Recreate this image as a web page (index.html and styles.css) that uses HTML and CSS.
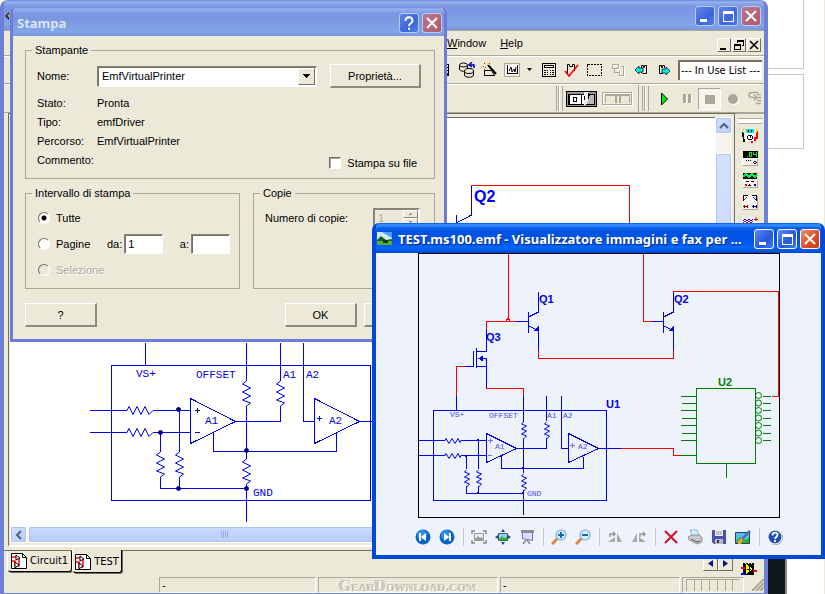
FILE: index.html
```html
<!DOCTYPE html>
<html lang="it">
<head>
<meta charset="utf-8">
<title>Stampa</title>
<link rel="stylesheet" href="styles.css">
</head>
<body>
<div class="desktop">
  <div class="page-box page-box-top"></div>
  <div class="page-box page-box-mid"></div>
  <div class="page-edge"></div>
  <div class="page-photo"></div>

  <section class="window editor" aria-label="Editor">
    <header class="titlebar muted">
      <svg class="app-mark" width="5" height="16" viewBox="0 0 5 16"><path d="M0 8l4-4v8z" fill="#222"/><path d="M2 8l2-2v3z" fill="#fa3"/></svg>
      <div class="controls">
        <button class="ctl" aria-label="Riduci"><svg width="18" height="18"><path d="M4 12h7v3H4z" fill="#fff"/></svg></button>
        <button class="ctl" aria-label="Ingrandisci"><svg width="18" height="18"><path d="M4 4h11v11H4zM5 7v7h9V7z" fill="#fff" fill-rule="evenodd"/></svg></button>
        <button class="ctl close" aria-label="Chiudi"><svg width="18" height="18"><path d="M4 4l10 10M14 4L4 14" stroke="#fff" stroke-width="2"/></svg></button>
      </div>
    </header>
    <nav class="menubar">
      <a href="#"><u>W</u>indow</a>
      <a href="#"><u>H</u>elp</a>
      <div class="mdi">
        <button aria-label="Riduci documento"><svg width="10" height="10" class="crisp"><path d="M1 8h6v2H1z"/></svg></button>
        <button aria-label="Ripristina documento"><svg width="10" height="10" class="crisp"><path d="M3 0h7v6H8V5h1V2H4v1H3zM0 4h7v6H0zM1 6v3h5V6z" fill-rule="evenodd"/></svg></button>
        <button aria-label="Chiudi documento"><svg width="10" height="10"><path d="M1 1l8 8M9 1L1 9" stroke="#000" stroke-width="1.6"/></svg></button>
      </div>
    </nav>
    <div class="toolbar">
      <button class="tool" aria-label="Griglia"><svg width="16" height="16" class="crisp"><path d="M4 2h9v12H4zM9 3v2h3V3zM9 6v2h3V6zM9 9v2h3V9z" fill-rule="evenodd"/></svg></button>
      <button class="tool" aria-label="Database"><svg width="16" height="16"><g fill="#ece9d8" stroke="#000"><path d="M.5 3v4c0 3 8 3 8 0V3"/><ellipse cx="4.500" cy="3" rx="4" ry="2"/><path d="M5.500 9v4c0 3 9 3 9 0V9"/><ellipse cx="10" cy="9" rx="4.500" ry="2.500"/></g><path d="M15 6V3h-4M13 0l-3 3 3 2" fill="none" stroke="#00a" stroke-width="1.500"/></svg></button>
      <button class="tool" aria-label="Procedura guidata"><svg width="16" height="16"><path d="M6 3l8 9" stroke="#000" stroke-width="2"/><path d="M2.500 8.500h7l3 5h-10z" fill="#ece9d8" stroke="#000"/><path d="M5 1h2v2H5z" fill="#ee0"/><path d="M2 1h1v1H2zM1 4h1v1H1zM3 5h1v1H3zM7 1h1v1H7zM2 7h1v1H2z" fill="#f00"/></svg></button>
      <button class="tool framed" aria-label="Grafico"><svg width="16" height="16" class="crisp"><path d="M.5 1.500h15v13H.5z" fill="#f4f2ea" stroke="#aca899"/><path d="M3 3h10v9H3z" fill="#fff"/><path d="M3.500 3v8.500H14M13.500 3v9" fill="none" stroke="#000"/><path d="M5 9l2-4 1 5 2-3 1 3 1-5" fill="none" stroke="#000" shape-rendering="auto"/></svg></button>
      <button class="tool drop" aria-label="Opzioni grafico"><svg width="6" height="4"><path d="M0 0h5L2.500 3z"/></svg></button>
      <button class="tool" aria-label="Calcolatrice"><svg width="16" height="16" class="crisp"><path d="M1.500 1.500h13v13h-13z" fill="#ece9d8" stroke="#000"/><path d="M3 3h10v3H3z"/><path d="M4 4h8v1H4z" fill="#fff"/><path d="M3 8h2v1H3zM6 8h1v1H6zM9 8h1v1H9zM11 8h2v1h-2zM3 10h2v1H3zM6 10h1v1H6zM9 10h1v1H9zM11 10h2v1h-2zM3 12h2v1H3zM6 12h1v1H6zM9 12h1v1H9zM11 12h2v1h-2z"/></svg></button>
      <button class="tool" aria-label="Verifica"><svg width="16" height="16"><path d="M3.500 12V2.500h2v2h3v-2h2V9" fill="none" stroke="#000"/><path d="M1 9l4 5L14 3" fill="none" stroke="#f00" stroke-width="1.700"/></svg></button>
      <button class="tool" aria-label="Selezione"><svg width="16" height="16" class="crisp"><path d="M.5 2.500h14v11H.5z" fill="none" stroke="#000" stroke-dasharray="2 1"/></svg></button>
      <button class="tool" aria-label="Sottocircuito"><svg width="16" height="16" class="crisp"><path d="M2.500 2.500h6v4h-6zM6.500 8.500h3M10.500 4.500h3v9h-4v-5" fill="none" stroke="#fff" transform="translate(1 1)"/><path d="M2.500 2.500h6v4h-6zM4.500 6v4h4M10.500 4.500h3v9h-4v-5" fill="none" stroke="#aca899"/></svg></button>
      <button class="tool" aria-label="Indietro"><svg width="16" height="16"><path d="M8.500 11V3.500h2v2h1v-2h2v8h-4" fill="#ece9d8" stroke="#000"/><path d="M2 8l4-4v2h4v4H6v2z" fill="#0ee" stroke="#000" stroke-width=".7"/></svg></button>
      <button class="tool" aria-label="Avanti"><svg width="16" height="16"><path d="M7 11.500H3.500v-8h2v2h1v-2h2V6" fill="#ece9d8" stroke="#000"/><path d="M14 9l-4-4v2H6v4h4v2z" fill="#0ee" stroke="#000" stroke-width=".7"/></svg></button>
      <select class="in-use" aria-label="In Use List"><option>--- In Use List ---</option></select>
    </div>
    <div class="toolbar sim">
      <span class="grip"></span>
      <button class="switch" aria-label="Interruttore"><svg width="31" height="16" class="crisp"><path d="M0 0h31v16H0z"/><path d="M1 1h29v14H1z" fill="#999"/><path d="M2 3h27v11H2z"/><path d="M4 4h11v9H4zM16 4h5v9h-5z" fill="#fff"/><path d="M18 1h5v9l-4 4h-1z" fill="#eee"/><path d="M22 2h1v8h-1zM18 5h1v4h-1z"/><path d="M24 4h4v9h-7z" fill="#bbb"/><path d="M7.500 6.500h3v4h-3z" fill="none" stroke="#000"/></svg></button>
      <button class="switch" aria-label="Pausa simulazione"><svg width="31" height="16" class="crisp"><path d="M1.500 2.500h29v12h-29z" fill="none" stroke="#fff"/><path d="M.5 1.500h29v12H.5z" fill="none" stroke="#aca899"/><path d="M3 3h25v2H3zM3 5h1v7H3zM27 5h1v7h-1zM13 5h2v7h-2zM17 5h2v7h-2z" fill="#aca899"/></svg></button>
      <span class="rule"></span>
      <span class="grip"></span>
      <button class="tool" aria-label="Avvia"><svg width="16" height="16"><path d="M5.500 2v12l6-6z" fill="#0e0" stroke="#000"/></svg></button>
      <button class="tool" aria-label="Pausa"><svg width="16" height="16" class="crisp"><path d="M5 4h3v9H5zM10 4h3v9h-3z" fill="#fff"/><path d="M4 3h3v9H4zM9 3h3v9H9z" fill="#aca899"/></svg></button>
      <button class="tool sunken" aria-label="Ferma"><svg width="16" height="16" class="crisp"><path d="M3 4h10v9H3z" fill="#aca899"/></svg></button>
      <button class="tool" aria-label="Registra"><svg width="16" height="16"><circle cx="9" cy="9" r="5" fill="#fff"/><circle cx="8" cy="8" r="5" fill="#aca899"/></svg></button>
      <button class="tool" aria-label="Passo"><svg width="16" height="16"><path d="M10 1.500H4c-4 0-4 5 0 5h4M6 3.500l3 3-3 3M9 3.500h4M10 6.500h3M9 9.500h4M8 12.500h5" fill="none" stroke="#aca899" stroke-width="1.500"/></svg></button>
    </div>

    <div class="workspace">
      <div class="document">
        <div class="sheet">
          <svg class="schematic" width="704" height="409" viewBox="10 118 704 409">
            <defs>
              <path id="zh" d="M0 0l2-4 4 8 4-8 4 8 4-8 4 8 4-4"/>
              <path id="zv" d="M0 0l-4 3 8 4-8 4 8 4-8 4 8 3-4 3"/>
            </defs>
            <g class="wire blue">
              <path d="M111.500 365.500h259v135h-259zM145.500 343v22M90 410.500h37M153 410.500h38M90 432.500h37M153 432.500h38M160.500 432v20M160.500 477v11h86M179.500 410v42M179.500 477v11M246.500 343v38M246.500 406v53M246.500 484v38M213.500 433v18h123v-19M236 421.500h44.500v-15.500M280.500 343v38M303.500 343v78.500h11M359 421.500h13M471.500 186v29l-15 8M456.500 215v8M195 410.500h5M197.500 408v5M195 432.500h5M317 418.500h5M319.500 416v5"/>
              <path d="M190.500 398.500v45l45-22zM314.500 398.500v45l45-22z"/>
              <g class="soft"><use href="#zh" x="127" y="410.500"/><use href="#zh" x="127" y="432.500"/>
              <use href="#zv" x="160.500" y="452"/><use href="#zv" x="179.500" y="452"/><use href="#zv" x="246.500" y="381"/><use href="#zv" x="246.500" y="459"/><use href="#zv" x="280.500" y="381"/></g>
            </g>
            <path class="wire red" d="M471 185.500h158.500V225M145.500 341v1M246.500 341v1"/>
            <g class="node"><circle cx="178.500" cy="409.500" r="2"/><circle cx="160.500" cy="432.500" r="2"/><circle cx="178.500" cy="488.500" r="2"/><circle cx="246.500" cy="450.500" r="2"/><circle cx="246.500" cy="488.500" r="2"/></g>
            <g class="mono">
              <text x="136" y="377">VS+</text><text x="196" y="378">OFFSET</text><text x="283" y="378">A1</text><text x="306" y="378">A2</text><text x="205" y="424">A1</text><text x="329" y="424">A2</text><text x="253" y="496">GND</text>
            </g>
            <text class="ref-big" x="474" y="202">Q2</text>
          </svg>
        </div>
        <div class="vscroll"><span class="sb-btn"><svg width="10" height="8"><path d="M1 6l4-4 4 4" fill="none" stroke="#4d6185" stroke-width="2"/></svg></span><span class="sb-thumb"></span></div>
        <div class="hscroll"><span class="sb-btn"><svg width="8" height="10"><path d="M6 1L2 5l4 4" fill="none" stroke="#4d6185" stroke-width="2"/></svg></span><span class="sb-thumb"><i></i><i></i><i></i><i></i></span></div>
      </div>
      <aside class="instruments">
        <span class="hgrip"></span>
        <svg width="16" height="16" class="crisp"><path d="M4 1h8v12H4z" fill="#fff"/><path d="M4 1h8v4H4z" fill="#0dd"/><path d="M0 4h2v7h1v3H1zM6 7h4v1H6zM5 8h1v3H5zM10 8h1v3h-1zM6 11h4v1H6zM8 8h1v2H8zM6 2h1v2H6zM9 2h1v2H9z"/><path d="M14 3h2v8h-2v2h-3v2H9v-2h3V9h2z" fill="#f00"/><path d="M1 1h1v4H1zM14 1h1v4h-1z" fill="#ed0"/></svg>
        <svg width="16" height="16" class="crisp"><path d="M0 8h16v7H0z" fill="#fff"/><path d="M1 9h15v7H1z" fill="#aca899"/><path d="M1 8h14v7H1z" fill="#f4f2ea"/><path d="M1 1h15v7H1z"/><path d="M5 6h1v1H5zM7 2h3v5H7zM8 3v3h1V3zM11 2h1v2h2V2h1v5h-1V5h-3z" fill="#0e0" fill-rule="evenodd"/><path d="M4 10h1v1H4zM6 10h1v1H6zM8 10h1v1H8zM12 11h2v1h-2zM11 12h1v1h-1zM14 12h1v1h-1zM12 13h2v1h-2z"/></svg>
        <svg width="16" height="16" class="crisp"><path d="M1 9h15v7H1z" fill="#aca899"/><path d="M0 7h15v8H0z" fill="#f4f2ea"/><path d="M1 1h14v6H1z"/><path d="M1 5l3-3 3 3 3-3 3 3 2-2" fill="none" stroke="#0e4" stroke-width="1.500"/><path d="M4 9h3v1H4zM9 9h3v1H9zM7 12h1v2H7zM6 13h3v1H6z"/><path d="M3 12h2v2H3z" fill="#d00"/><path d="M12 12h2v2h-2z" fill="#00a"/></svg>
        <svg width="16" height="16" class="crisp"><path d="M1 2h15v14H1z" fill="#aca899"/><path d="M0 1h15v14H0z" fill="#f4f2ea"/><path d="M1 1h5v6H1zM10 1h5v6h-5z" fill="#fff"/><path d="M1.500 7V1.500H6M10 1.500h4.500V7" fill="none" stroke="#000"/><path d="M2 6l3-3" stroke="#d00" shape-rendering="auto"/><path d="M11 3l3 3" stroke="#00d" shape-rendering="auto"/><path d="M1 12h5v1H1zM2 11h1v3H2zM5 11h1v3H5z" fill="#900"/><path d="M10 12h5v1h-5zM11 11h1v3h-1zM14 11h1v3h-1z" fill="#009"/></svg>
        <svg width="16" height="16" class="crisp"><path d="M0 1h15v14H0z" fill="#f4f2ea"/><path d="M1 5l2-2 2 2 2-2 2 2 2-2" fill="none" stroke="#00d" shape-rendering="auto"/><path d="M1 7l2-2 2 2 2-2 2 2 2-2M12 3.500h4M14 1v4" fill="none" stroke="#e00" shape-rendering="auto"/></svg>
      </aside>
    </div>

    <div class="sheet-tabs">
      <button class="sheet-tab"><svg width="16" height="16" viewBox="0 0 16 16"><use href="#doc"/></svg>Circuit1</button>
      <button class="sheet-tab active"><svg width="16" height="16" viewBox="0 0 16 16"><g id="doc"><path d="M.5.500h11l4 4v11H.5z" fill="#fff" stroke="#000"/><path d="M11.500.500v4h4" fill="none" stroke="#000"/><path d="M1 4h4M1 8h3v5h4M8 5v8" fill="none" stroke="#f00" stroke-width="1.500"/><path d="M5 2l4 3-4 2zM4 9l4 3-4 3z" fill="#fff" stroke="#000"/></g></svg>TEST</button>
      <span class="tab-nav"><button aria-label="Foglio precedente"><svg width="5" height="8"><path d="M5 0v7L0 3.500z" fill="#00138c"/></svg></button><button aria-label="Foglio successivo"><svg width="5" height="8"><path d="M0 0v7l5-3.500z" fill="#00138c"/></svg></button></span>
      <svg class="chip crisp" width="16" height="14"><path d="M2 1h2v1h1V1h2v1h1V1h2v1h1V1h2v12H2z"/><path d="M5 2l7 5-7 5z" fill="#ff0"/><path d="M0 5h4v2H0zM12 8h4v2h-4z" fill="#f00"/><path d="M0 11h4v2H0z" fill="#00f"/><path d="M6 7h4M8 5v4" stroke="#000"/></svg>
    </div>
    <footer class="status">
      <span class="cell first">-</span>
      <span class="cell mark">GearDownload.com</span>
      <span class="cell">-</span>
      <span class="cell meter"><i></i><i></i><i></i><i></i><i></i><i></i><i></i></span>
      <svg class="resize" width="14" height="14"><path d="M2 14L14 2M6 14l8-8M10 14l4-4" stroke="#aca899" stroke-width="2"/></svg>
    </footer>
  </section>

  <section class="window dialog" role="dialog" aria-labelledby="dlg-title">
    <header class="titlebar muted">
      <h1 id="dlg-title">Stampa</h1>
      <div class="controls">
        <button class="ctl" aria-label="Guida"><svg width="18" height="18"><path d="M5.500 7c0-5 7-5 7-.5 0 3-3.500 2.500-3.500 5.500M9 13.500V16" fill="none" stroke="#fff" stroke-width="2"/></svg></button>
        <button class="ctl close" aria-label="Chiudi"><svg width="18" height="18"><path d="M4 4l10 10M14 4L4 14" stroke="#fff" stroke-width="2"/></svg></button>
      </div>
    </header>
    <form class="dialog-body">
      <fieldset>
        <legend>Stampante</legend>
        <div class="name-row">
          <label for="printer">Nome:</label>
          <span class="combo"><select id="printer"><option>EmfVirtualPrinter</option></select><span class="combo-arrow"><svg width="7" height="4" class="crisp"><path d="M0 0h7v1H0zM1 1h5v1H1zM2 2h3v1H2zM3 3h1v1H3z"/></svg></span></span>
          <button type="button" class="push">Proprietà...</button>
        </div>
        <dl class="facts">
          <dt>Stato:</dt><dd>Pronta</dd>
          <dt>Tipo:</dt><dd>emfDriver</dd>
          <dt>Percorso:</dt><dd>EmfVirtualPrinter</dd>
          <dt>Commento:</dt><dd class="to-file"><input type="checkbox" id="tofile"><label for="tofile">Stampa su file</label></dd>
        </dl>
      </fieldset>
      <div class="pair">
        <fieldset class="range">
          <legend>Intervallo di stampa</legend>
          <div class="opt"><input type="radio" name="r" id="all" checked><label for="all">Tutte</label></div>
          <div class="opt"><input type="radio" name="r" id="pages"><label for="pages" class="wide">Pagine</label><label for="from">da:</label><input type="text" id="from" value="1"><label for="to" class="to">a:</label><input type="text" id="to"></div>
          <div class="opt off"><input type="radio" name="r" id="sel" disabled><label for="sel">Selezione</label></div>
        </fieldset>
        <fieldset class="copies">
          <legend>Copie</legend>
          <div class="opt"><label for="n">Numero di copie:</label><span class="spin"><input type="text" id="n" value="1" disabled><span class="spin-btns"><b><svg width="3" height="2"><path d="M1 0h1v1h1v1H0V1h1z" fill="#888"/></svg></b><b><svg width="3" height="2"><path d="M0 0h3v1H2v1H1V1H0z" fill="#888"/></svg></b></span></span></div>
        </fieldset>
      </div>
      <div class="actions">
        <button type="button" class="push help">?</button>
        <button type="button" class="push">OK</button>
        <button type="button" class="push">Annulla</button>
      </div>
    </form>
  </section>

  <section class="window viewer" aria-labelledby="view-title">
    <header class="titlebar">
      <svg width="16" height="16" viewBox="0 0 16 16"><path d="M0 1h15v13H0z" fill="#cfe8fa"/><path d="M5 1h10v6z" fill="#4b9ee8"/><path d="M0 9l4-4 5 4 6-1v3H0z" fill="#175c25"/><path d="M0 10h15v4H0z" fill="#5aae35"/><path d="M6 9h5v3H6z" fill="#0b3b1a"/></svg>
      <h1 id="view-title">TEST.ms100.emf - Visualizzatore immagini e fax per ...</h1>
      <div class="controls">
        <button class="ctl" aria-label="Riduci"><svg width="18" height="18"><path d="M4 12h7v3H4z" fill="#fff"/></svg></button>
        <button class="ctl" aria-label="Ingrandisci"><svg width="18" height="18"><path d="M4 4h11v11H4zM5 7v7h9V7z" fill="#fff" fill-rule="evenodd"/></svg></button>
        <button class="ctl close" aria-label="Chiudi"><svg width="18" height="18"><path d="M4 4l10 10M14 4L4 14" stroke="#fff" stroke-width="2"/></svg></button>
      </div>
    </header>
    <div class="picture">
      <svg class="schematic" width="362" height="265" viewBox="418 253 362 265">
        <defs>
          <path id="sh" d="M0 0l1-2 3 5 3-5 3 5 3-5 2 4 1-2"/>
          <path id="sv" d="M0 0l-2 2 5 2-5 3 5 2-5 3 5 2-3 3"/>
          <g id="npn"><path d="M12 0h12M24.500-10V11M24.500-4.500l10-5V-30M24.500 4.500l10 4.500V30"/><path d="M30.500 9h4v-4z" fill="#00f"/></g>
        </defs>
        <path class="wire" stroke="#000" d="M418.500 253.500h361v264h-361z"/>
        <g class="wire blue">
          <use href="#npn" x="504" y="321.500"/><use href="#npn" x="639" y="321.500"/>
          <path d="M486.500 329v22.500h-10M473.500 351v16M476.500 348v20M476 366.500h10M478 358.500h8.500V388M464 366.500h9M456.500 396v14M433.500 410.500h173v90h-173zM523.500 396v26M523.500 439v34M523.500 490v25M418 440.500h27M461 440.500h25M418 455.500h27M461 455.500h25M466.500 456v13M466.500 486v7.500h57M478.500 441v28M478.500 486v7M501.500 456v12.500h82V457M516 448.500h30.500V438M546.500 396v25M561.500 396v52.500h7M598 448.500h23"/>
          <path class="faint" d="M488 440.500h5M490.500 438v5M488 455.500h4M570 445.500h5M572.500 443v5"/>
          <path d="M486.500 433.500v29l30-14zM568.500 433.500v29l30-14z"/>
          <path d="M479 358.500l3-2v4z" fill="#00f"/>
          <g class="soft"><use href="#sh" x="445" y="440.500"/><use href="#sh" x="445" y="455.500"/>
          <use href="#sv" x="466.500" y="470"/><use href="#sv" x="478.500" y="470"/><use href="#sv" x="523.500" y="422"/><use href="#sv" x="523.500" y="474"/><use href="#sv" x="546.500" y="422"/></g>
        </g>
        <path d="M477 439h2v2h-2zM465 455h2v2h-2zM477 492h2v2h-2zM522 467h2v2h-2zM522 492h2v2h-2z" fill="#008"/>
        <path class="wire red" d="M508.500 254v66M506 321l2-3 2 3M516 321.500h-29.500V329M538.500 351v7.500h135V351M486.500 388v.5h37V396M456.500 396v-29.500h8M643.500 254v67.500h8M673 291.500h105.500V396.500h-7M621 448.500h52.500v7h8"/>
        <g class="wire green">
          <path d="M696.500 388.500h59v75h-59zM726.500 464v14M681 396.500h15M682 403.500h14M681 410.500h15M682 418.500h14M681 425.500h15M682 433.500h14M681 440.500h15M681 455.500h15M763 396.500h8M763 403.500h8M763 410.500h8M763 418.500h8M763 425.500h8M763 433.500h8M763 440.500h8"/>
          <g class="soft"><circle cx="758.500" cy="395.500" r="3"/><circle cx="758.500" cy="403" r="3"/><circle cx="758.500" cy="410.500" r="3"/><circle cx="758.500" cy="418" r="3"/><circle cx="758.500" cy="425.500" r="3"/><circle cx="758.500" cy="433" r="3"/><circle cx="758.500" cy="440.500" r="3"/></g>
        </g>
        <g class="mono small"><text x="450" y="417">VS+</text><text x="489" y="418">OFFSET</text><text x="547" y="418">A1</text><text x="563" y="418">A2</text><text x="495" y="449">A1</text><text x="578" y="449">A2</text><text x="527" y="496">GND</text></g>
        <g class="ref"><text x="539" y="303">Q1</text><text x="674" y="303">Q2</text><text x="486" y="341">Q3</text><text x="606" y="408">U1</text><text class="green-text" x="718" y="386">U2</text></g>
      </svg>
    </div>
    <div class="view-tools">
      <button aria-label="Immagine precedente"><svg width="16" height="16"><circle cx="8" cy="8" r="7.500" fill="#0b62c8"/><circle cx="7" cy="6" r="5" fill="#2c8df0"/><path d="M4 4h2v8H4zM11 4v8L6 8z" fill="#fff"/></svg></button>
      <button aria-label="Immagine successiva"><svg width="16" height="16"><circle cx="8" cy="8" r="7.500" fill="#0b62c8"/><circle cx="7" cy="6" r="5" fill="#2c8df0"/><path d="M10 4h2v8h-2zM5 4v8l5-4z" fill="#fff"/></svg></button>
      <span class="bar"></span>
      <button aria-label="Dimensioni effettive"><svg width="16" height="16"><path d="M1 5V2h3M12 2h3v3M15 11v3h-3M4 14H1v-3" fill="none" stroke="#888" stroke-width="1.500"/><path d="M3.500 4.500h9v7h-9z" fill="#eee" stroke="#999"/><path d="M4 10l3-3 2 2 2-1 1 3H4z" fill="#999"/></svg></button>
      <button aria-label="Adatta alla finestra"><svg width="16" height="16"><path d="M3.500 4.500h9v7h-9z" fill="#9cf" stroke="#456"/><path d="M4 10l3-3 2 2 3-1v3H4z" fill="#2b3"/><path d="M6 3h4L8 0zM6 13h4l-2 3zM3 6v4L0 8zM13 6v4l3-2z" fill="#14499c"/></svg></button>
      <button aria-label="Presentazione"><svg width="16" height="16"><path d="M7 11l-3 4M8 11l3 4" stroke="#888" stroke-width="1.500"/><path d="M3.500 3.500h10v8l-10-2z" fill="#dcdcff" stroke="#77a"/><path d="M2 1h13v3H2z" fill="#8a8a9a"/></svg></button>
      <span class="bar"></span>
      <button aria-label="Zoom avanti"><svg width="16" height="16"><path d="M1 15l6-6" stroke="#d98a3c" stroke-width="3"/><circle cx="10" cy="6" r="5" fill="#d4f0ff" stroke="#8fb9e8" stroke-width="1.500"/><path d="M7 6h6M10 3v6" stroke="#1668a8" stroke-width="2"/></svg></button>
      <button aria-label="Zoom indietro"><svg width="16" height="16"><path d="M1 15l6-6" stroke="#d98a3c" stroke-width="3"/><circle cx="10" cy="6" r="5" fill="#d4f0ff" stroke="#8fb9e8" stroke-width="1.500"/><path d="M7 6h6" stroke="#1668a8" stroke-width="2"/></svg></button>
      <span class="bar"></span>
      <button aria-label="Ruota a destra"><svg width="16" height="16"><path d="M1 13h7V8zM10 4v9h5z" fill="#a9a9a9"/><path d="M3 8V5h4M6 3l2 2-2 2" fill="none" stroke="#999" stroke-width="1.500"/></svg></button>
      <button aria-label="Ruota a sinistra"><svg width="16" height="16"><path d="M15 13H8V8zM6 4v9H1z" fill="#a9a9a9"/><path d="M9 8V5h4M12 3l2 2-2 2" fill="none" stroke="#999" stroke-width="1.500"/></svg></button>
      <span class="bar"></span>
      <button aria-label="Elimina"><svg width="16" height="16"><path d="M2 2l12 12M14 2L2 14" stroke="#d4102c" stroke-width="2"/></svg></button>
      <button aria-label="Stampa"><svg width="16" height="16"><path d="M3 1h7l2 6H5z" fill="#d9efff" stroke="#69c" stroke-width=".7"/><path d="M1 8l4-2h8l2 3v4l-5 2-8-4z" fill="#c9c9c9" stroke="#777" stroke-width=".7"/><path d="M4 10l6 3 3-1" stroke="#555" fill="none"/></svg></button>
      <button aria-label="Copia su"><svg width="16" height="16"><path d="M1 1h14v14H3l-2-2z" fill="#4a4fb0"/><path d="M4 1h8v6H4z" fill="#eee"/><path d="M5 3h6M5 5h6" stroke="#999"/><path d="M4 10h8v5H4z" fill="#bbb"/><path d="M6 11h2v3H6z" fill="#334"/></svg></button>
      <button aria-label="Modifica"><svg width="16" height="16"><path d="M.5 3.500h14v11H.5z" fill="#5cc0ee" stroke="#245"/><path d="M1 12l4-4 4 3 5-2v5H1z" fill="#3a3"/><path d="M15 2L7 10" stroke="#47b" stroke-width="3"/><path d="M3 12l3-3 2 2-2 4H3z" fill="#e7a52c"/></svg></button>
      <span class="bar"></span>
      <button aria-label="Guida"><svg width="16" height="16"><circle cx="8.500" cy="8.500" r="7.500" fill="#888"/><circle cx="8" cy="8" r="7.500" fill="#fff"/><circle cx="8" cy="8" r="6.500" fill="#1f4fb5"/><path d="M5.500 6.500c0-4 5-3.500 5-.5 0 2-2.500 2-2.500 4M8 11v2" fill="none" stroke="#fff" stroke-width="1.800"/></svg></button>
    </div>
  </section>
</div>
</body>
</html>
```
FILE: styles.css
```css
* { box-sizing: border-box; }
body { margin: 0; font: 11px/14px "Liberation Sans", sans-serif; color: #000; }
button, input, select { font: inherit; color: inherit; margin: 0; padding: 0; border: 0; border-radius: 0; background: none; }
svg { display: block; flex: none; }
.crisp { shape-rendering: crispEdges; }
h1 { margin: 0; font: bold 13px/20px "Noto Sans", "Open Sans", sans-serif; white-space: nowrap; }

.desktop { position: relative; height: 100vh; min-height: 594px; overflow: hidden; background: #fff; }
.page-box { position: absolute; right: 21px; width: 80px; border: 1px solid #c8c8c8; }
.page-box-top { top: -10px; height: 79px; }
.page-box-mid { top: 74px; height: 75px; }
.page-edge { position: absolute; right: 0; top: 0; bottom: 0; width: 1px; background: #ece9d8; }
.page-photo { position: absolute; right: 38px; width: 22px; top: 400px; bottom: 0; background: #10181a; border-right: 2px solid #888; }

/* Windows */
.window { position: absolute; display: flex; flex-direction: column; }
.titlebar { display: flex; align-items: center; flex: none; color: #fff; background: linear-gradient(#0058e6 0, #3a93ff 2px, #0a5fe8 5px, #0053e0 10px, #0058ee 20px, #0666fb 25px, #0044d0 100%); text-shadow: 1px 1px 1px #0a2a80; }
.titlebar.muted { color: #d8e4f8; text-shadow: none; background: linear-gradient(#6d86dc 0, #98b2ee 2px, #7d98e2 6px, #7b96e0 12px, #82a5e8 24px, #7a96e0 100%); }
.controls { display: flex; gap: 3px; margin-left: auto; }
.ctl { width: 20px; height: 20px; border: 1px solid #fff; border-radius: 3px; background: linear-gradient(135deg, #5b8bf5, #2658dc 60%, #3a7af5); }
.ctl.close { background: linear-gradient(135deg, #ee8c6c, #dc4a22 60%, #c83c14); }
.muted .ctl { border-color: #b9cbf4; background: linear-gradient(135deg, #5f83e6, #3d66dc 60%, #4a80f0); }
.muted .ctl.close { background: linear-gradient(135deg, #b87888, #b0586a); }

.editor { left: 0; right: 57px; top: 0; bottom: 0; background: #ece9d8; border: solid #6c80d8; border-width: 0 4px 1px; border-radius: 8px 8px 0 0; overflow: hidden; }
.editor .titlebar { height: 31px; margin: 0 -4px; padding: 2px 7px 0 5px; border-bottom: 1px solid #aca899; }
.menubar { display: flex; align-items: center; height: 25px; padding: 0 3px 0 443px; gap: 14px; border-bottom: 1px solid #aca899; }
.menubar a { color: #000; text-decoration: none; }
.mdi { display: flex; gap: 1px; margin: 4px 0 0 auto; }
.mdi button { width: 14px; height: 14px; padding: 1px; border: 1px solid; border-color: #fff #716f64 #716f64 #fff; background: #ece9d8; }
.toolbar { display: flex; align-items: center; justify-content: flex-end; height: 28px; border: solid; border-width: 1px 0; border-color: #fff #fff #aca899; }
.tool { display: grid; place-items: center; flex: none; width: 23px; height: 22px; }
.tool.drop { width: 14px; }
.tool.framed { width: 22px; }
.in-use { width: 84px; height: 20px; margin: 0 2px 0 3px; padding: 0 0 0 1px; appearance: none; background: #fff; border: solid #716f64; border-width: 2px 0 0 2px; font: 11px/16px "DejaVu Sans Condensed", sans-serif; overflow: hidden; text-overflow: clip; }
.sim { height: 29px; }
.sim .tool:last-child { margin-right: -3px; }
.grip { width: 7px; height: 25px; margin: 0 3px; border: solid; border-width: 0 1px; border-color: #fff #aca899; background: linear-gradient(90deg, #ece9d8 1px, #aca899 1px 2px, #fff 2px 3px, #ece9d8 3px); }
.switch { margin-right: 5px; }
.rule { width: 1px; height: 27px; background: #aca899; }
.sim .sunken { border: 1px solid; border-color: #aca899 #fff #fff #aca899; background: #f6f4ec; }

.workspace { display: flex; flex: 1; min-height: 0; }
.document { flex: 1; display: grid; grid-template: minmax(0, 1fr) 17px / minmax(0, 1fr) 17px; margin-left: 4px; padding: 3px 2px 2px 1px; border: 1px solid #716f64; border-bottom: 2px solid #fff; }
.sheet { background: #fff; overflow: hidden; border-top: 1px solid #716f64; }
.vscroll, .hscroll { display: flex; background: #f5f4ee; overflow: hidden; }
.vscroll { flex-direction: column; }
.hscroll { grid-column: 1; }
.sb-btn, .sb-thumb { display: flex; align-items: center; justify-content: center; flex: none; border: 1px solid #fff; border-radius: 2px; background: linear-gradient(135deg, #d4e0fe, #b9ccfa); box-shadow: inset 0 0 0 1px #b0c4f4; }
.sb-btn { width: 17px; height: 17px; }
.vscroll .sb-thumb { flex: 1; margin-top: 19px; }
.hscroll .sb-thumb { width: 393px; margin-left: 1px; gap: 1px; background: linear-gradient(#cbdafe, #b9ccfa); }
.sb-thumb i { width: 1px; height: 7px; background: #8cb0f8; }
.instruments { display: flex; flex-direction: column; align-items: center; gap: 6px; width: 29px; padding-top: 4px; border-top: 1px solid #aca899; }
.hgrip { width: 24px; height: 6px; margin-bottom: -2px; border: solid #aca899; border-width: 1px 0; background: #fff; }

.sheet-tabs { display: flex; flex: none; align-items: flex-start; height: 27px; margin-top: 3px; padding: 0 2px 0 3px; border-top: 1px solid #716f64; font: 11px/14px "DejaVu Sans Condensed", sans-serif; }
.sheet-tab { display: flex; align-items: center; gap: 3px; height: 21px; padding: 0 3px; border: solid #000; border-width: 0 1px 1px 0; border-left: 1px solid #fff; border-radius: 0 0 3px 4px; box-shadow: 1px 1px 0 #716f64; }
.sheet-tab.active { height: 23px; margin-top: -1px; padding: 1px 2px 0; background: #ece9d8; }
.tab-nav { display: flex; margin-left: auto; padding-top: 6px; }
.tab-nav button { display: grid; place-items: center; width: 15px; height: 14px; border: 1px solid; border-color: #fff #716f64 #716f64 #fff; }
.chip { margin: 11px 5px 0 8px; }
.status { display: flex; flex: none; height: 16px; padding-left: 155px; gap: 2px; }
.cell { flex: 15 1 0; min-width: 0; border: 1px solid; border-color: #aca899 #fff #fff #aca899; padding: 0 2px; white-space: nowrap; }
.cell.first { flex-grow: 13; }
.cell.mark { text-align: center; font: bold small-caps 16px/15px "Liberation Serif", serif; color: #d2cfbf; text-shadow: 1px 1px 0 #fff, -1px 0 0 #b5b2a4; }
.cell.meter { display: flex; flex: none; width: 62px; padding: 1px 3px; margin-right: 4px; }
.meter i { flex: 1; border: solid #aca899; border-width: 1px 0 0 1px; }

/* Print dialog */
.dialog { left: 10px; top: 7px; width: 437px; background: #ece9d8; border: solid #6c7cd8; border-width: 0 3px 3px; border-radius: 7px 7px 0 0; overflow: hidden; }
.dialog .titlebar { height: 29px; margin: 0 -3px; padding: 2px 5px 0 7px; }
.dialog-body { padding: 7px 9px 12px 12px; }
fieldset { margin: 0; padding: 7px 11px 9px; min-width: 0; border: 1px solid #aca899; }
legend { padding: 0 3px; margin-left: -5px; height: 14px; }
.name-row { display: flex; align-items: center; height: 24px; }
.name-row label { width: 60px; }
.combo { position: relative; width: 220px; }
.combo select, .opt input[type="text"] { appearance: none; background: #fff; border: 1px solid; border-color: #87857a #fff #fff #87857a; box-shadow: inset 1px 1px 0 #716f64; height: 21px; padding: 0 4px; }
.combo select { display: block; width: 100%; }
.combo-arrow { position: absolute; right: 2px; top: 2px; width: 17px; height: 17px; display: grid; place-items: center; background: #ece9d8; border: 1px solid; border-color: #fff #716f64 #716f64 #fff; pointer-events: none; }
.push { height: 24px; border: solid; border-width: 1px 2px 2px 1px; border-color: #fff #8d8a7d #8d8a7d #fff; background: #ece9d8; }
.name-row .push { width: 91px; margin-left: 13px; }
.facts { display: grid; grid-template-columns: 60px 1fr; grid-auto-rows: 19px; align-items: center; margin: 5px 0 0; }
.facts dd { margin: 0; }
.to-file { display: flex; align-items: center; justify-content: flex-end; gap: 6px; padding: 6px 6px 0 0; }
input[type="checkbox"] { appearance: none; width: 12px; height: 12px; background: #fff; border: 1px solid; border-color: #716f64 #fff #fff #716f64; box-shadow: inset 1px 1px 0 #aca899; }
.pair { display: flex; gap: 13px; margin-top: 7px; }
.pair fieldset { height: 103px; padding-top: 5px; }
.range { width: 215px; }
.copies { flex: 1; }
.opt { display: flex; align-items: center; height: 26px; }
.range .opt { margin-right: -5px; }
input[type="radio"] { appearance: none; flex: none; width: 12px; height: 12px; margin: 0 6px 0 1px; border-radius: 50%; border: 1px solid; border-color: #716f64 #fff #fff #716f64; background: #fff; }
input[type="radio"]:checked { background: radial-gradient(#000 2px, #fff 3px); }
input[type="radio"]:disabled { background: #ece9d8; }
.wide { width: 51px; }
.opt input[type="text"] { width: 39px; height: 20px; margin-left: 2px; padding: 0 3px; }
.to { margin-left: auto; }
.opt #to { margin-right: 3px; }
.off label { color: #aca899; text-shadow: 1px 1px 0 #fff; }
.spin { display: flex; width: 47px; height: 21px; margin-left: auto; margin-right: 3px; border: 2px solid; border-color: #87857a #fff #fff #87857a; }
.spin input[type="text"] { width: 28px; height: 17px; margin: 0; border: 0; box-shadow: none; background: #ece9d8; color: #aca899; }
.spin-btns { display: flex; flex: 1; flex-direction: column; }
.spin-btns b { display: grid; place-items: center; flex: 1; border: 1px solid; border-color: #fff #87857a #87857a #fff; }
.actions { display: flex; gap: 7px; margin-top: 14px; }
.actions .push { width: 72px; flex: none; }
.actions .help { margin-right: 181px; }

/* Picture viewer */
.viewer { left: 372px; right: 0; top: 223px; background: #eef2fb; border: solid #0048d8; border-width: 0 4px 4px; border-radius: 7px 7px 0 0; overflow: hidden; }
.viewer .titlebar { height: 30px; margin: 0 -4px; padding: 2px 5px 0; gap: 5px; }
.viewer h1 { flex: 1; min-width: 0; overflow: hidden; text-overflow: ellipsis; }
.picture { display: flex; justify-content: center; }
.view-tools { display: flex; align-items: center; justify-content: center; height: 37px; }
.view-tools button { display: grid; place-items: center; width: 24px; height: 24px; }
.bar { width: 1px; height: 18px; margin: 0 3px 0 4px; background: #cdc9b4; }

/* Circuit drawings */
.wire { fill: none; stroke-width: 1; shape-rendering: crispEdges; }
.blue { stroke: #0000f0; }
.red { stroke: #f80000; }
.green { stroke: #008000; }
.soft { shape-rendering: auto; }
.faint { stroke: #7070f0; }
.node { fill: #000040; stroke: #0000c0; }
.mono { font: 11px "Liberation Mono", monospace; fill: #0000e8; }
.mono.small { font-size: 8px; fill: #5050e8; }
.ref { font: bold 11px "Liberation Sans", sans-serif; fill: #0000e0; }
.ref-big { font: bold 16px "Liberation Sans", sans-serif; fill: #0000f0; }
.ref .green-text { fill: #008000; }
```
